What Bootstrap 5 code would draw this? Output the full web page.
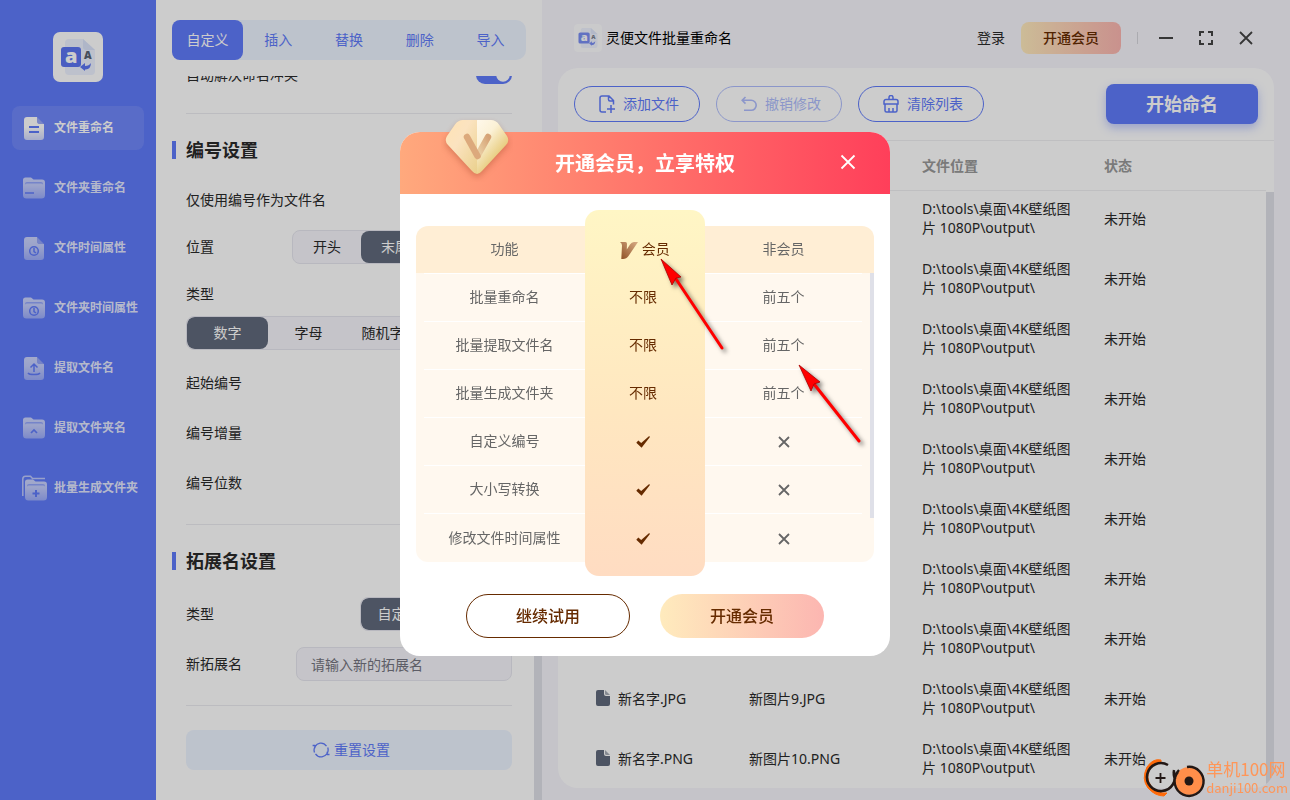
<!DOCTYPE html>
<html lang="zh-CN">
<head>
<meta charset="utf-8">
<meta name="viewport" content="width=device-width, initial-scale=1">
<title>灵便文件批量重命名</title>
<link href="https://cdn.jsdelivr.net/npm/bootstrap@5.3.0/dist/css/bootstrap.min.css" rel="stylesheet">
<style>
  :root { --brand: #607bfb; --ink: #2a2a2a; --pale: #edf4ff; --mist: #f7f6fc; --brown: #662b00; --vip: linear-gradient(90deg, #ffebbd, #fcb6b1); }
  body { font-family: "Noto Sans", "Noto Sans CJK SC", sans-serif; font-size: 14px; line-height: 20px; color: var(--ink); background: var(--mist); }
  .btn { font-size: 14px; line-height: 20px; }
  .app { height: 100vh; min-height: 600px; }

  /* sidebar */
  .side { width: 156px; background: var(--brand); padding: 32px 12px; }
  .logo-lg { width: 50px; height: 50px; margin-bottom: 24px; }
  .side .nav-link { height: 44px; padding: 0 0 0 10px; border-radius: 8px; color: #fff; font-size: 12px; font-weight: 700; white-space: nowrap; }
  .side .nav-link:not(.active) { color: rgba(255,255,255,.84); }
  .side .nav-link.active { background: rgba(255,255,255,.1); }
  .side svg.ico { width: 24px; height: 26px; flex: none; }

  /* settings column */
  .settings { width: 386px; background: #fff; padding-top: 20px; }
  .tabs { margin: 0 16px 16px; background: var(--pale); border-radius: 10px; }
  .tabs .nav-link { height: 40px; padding: 0; border-radius: 8px; color: var(--brand); }
  .tabs .nav-link.active { background: var(--brand); color: #fff; }
  .pane { min-height: 0; padding: 0 30px 30px; }
  .pane hr { margin: 24px 0; color: #ececf0; opacity: 1; flex: none; }
  .sect { font-size: 18px; line-height: 24px; font-weight: 700; margin: 0 0 24px -14px; gap: 10px; flex: none; }
  .sect::before { content: ""; width: 4px; height: 18px; background: var(--brand); }
  .line-s { height: 28px; margin-bottom: 16px; flex: none; }
  .line-m { height: 34px; margin-bottom: 16px; flex: none; }
  .line-end { margin-bottom: 0; }
  .form-switch .form-check-input { width: 36px; height: 18px; margin: 0; background-color: var(--brand); border: 0; }
  .seg { height: 34px; border: 1px solid #e7e7ef; border-radius: 8px; background: var(--mist); overflow: hidden; flex: none; }
  .seg .btn { padding: 0; border: 0; border-radius: 8px; color: var(--ink); flex: 0 0 25%; }
  .seg .btn.active { background: #616a7c; color: #fff; }
  .seg-pos { width: 220px; } .seg-pos .btn { flex-basis: 68px; }
  .seg-ext { width: 152px; } .seg-ext .btn { flex-basis: 75px; }
  .ext-in { width: 216px; height: 34px; font-size: 14px; line-height: 20px; padding: 6px 14px; background: var(--mist); border: 1px solid #e7e7ef; border-radius: 8px; }
  .ext-in::placeholder { color: #757580; }
  .reset { height: 40px; background: var(--pale); color: var(--brand); border-radius: 8px; flex: none; border: 0; }
  .thumb { right: 0; top: 50%; bottom: 0; width: 8px; background: #dfe0e8; }

  /* main column */
  .work { min-width: 0; padding: 0 16px 12px; }
  .top { height: 68px; padding: 8px 16px 0; }
  .logo-sm { width: 28px; height: 28px; }
  .vip-sm { width: 100px; height: 32px; padding: 0; border: 0; border-radius: 8px; background: var(--vip); color: var(--brown); font-weight: 500; }
  .split { width: 1px; height: 12px; background: #d6d6dc; }
  .win { width: 16px; height: 16px; padding: 0; border: 0; line-height: 0; display: block; }
  .panel { background: #fff; border-radius: 20px; min-height: 0; overflow: hidden; }
  .tools { height: 73px; padding: 0 16px; border-bottom: 1px solid #efeff2; flex: none; }
  .tool { width: 126px; height: 36px; padding: 0 0 0 4px; border-radius: 18px; border-color: var(--brand); color: var(--brand); }
  .tool:disabled { opacity: .5; border-color: var(--brand); color: var(--brand); }
  .go { width: 152px; height: 40px; padding: 0; border: 0; border-radius: 8px; background: var(--brand); color: #fff; font-size: 18px; font-weight: 700; box-shadow: 0 4px 10px rgba(96,123,251,.4); }
  .files { table-layout: fixed; width: calc(100% - 8px); }
  .files th { height: 49px; padding: 2px 0 0; color: #999; font-weight: 700; border-bottom: 1px solid #efeff2; }
  .files td { height: 60px; padding: 0 0 4px; line-height: 19px; vertical-align: middle; }
  .files td:nth-child(3) { padding-right: 26px; }
  .files td:first-child { padding-left: 38px; }
  .files .c1 { width: 191px; } .files .c2 { width: 173px; } .files .c3 { width: 182px; }
  .list-thumb { right: 0; top: 51px; bottom: 0; width: 8px; background: #dfe0e8; }

  /* membership dialog */
  .modal-backdrop { --bs-backdrop-opacity: .2; }
  .offer { padding-bottom: 12px; }
  .offer .modal-dialog { --bs-modal-width: 490px; max-width: 490px; margin: 0 auto; min-height: 100%; }
  .offer .modal-content { border: 0; border-radius: 20px; }
  .offer .modal-header { height: 62px; padding: 2px 34px 0; border: 0; border-radius: 20px 20px 0 0; background: linear-gradient(90deg, #ffa97d, #ff7e6e 40%, #ff3f5a); color: #fff; }
  .offer h2 { font-size: 20px; line-height: 28px; font-weight: 700; margin: 0; }
  .shut { right: 34px; top: 22px; }
  .gem { left: 41px; top: -18px; width: 72px; height: 68px; }
  .offer .modal-body { padding: 32px 16px; }
  .plan { background: linear-gradient(#ffeed5 0 47px, #fff8ef 47px); border-radius: 12px; padding: 0 12px 0 8px; }
  .plan::before { content: ""; position: absolute; top: -16px; bottom: -14px; left: 0; right: 0; width: 120px; margin: 0 auto; border-radius: 14px; background: linear-gradient(#fff6c5, #ffe7c0 55%, #ffdcc2); }
  .plan table { table-layout: fixed; position: relative; color: #666; text-align: center; }
  .plan th { height: 47px; padding: 0; font-weight: 400; }
  .plan td { height: 48px; padding: 0; }
  .plan tbody td { border-top: 1px solid #fff; }
  .plan td:nth-child(2), .plan th:nth-child(2) { color: var(--brown); }
  .plan tbody td:nth-child(2) { border-color: transparent; padding-right: 4px; }
  .plan tr:last-child td { height: 49px; }
  .plan .k1 { width: 161px; } .plan .k2 { width: 120px; }
  .plan-thumb { right: 0; top: 47px; width: 4px; height: 245px; background: #dfe0e8; }
  .offer .modal-footer { padding: 0 0 18px; border: 0; gap: 30px; }
  .pill { width: 164px; height: 44px; margin: 0; border-radius: 22px; font-size: 16px; font-weight: 500; color: var(--brown); border: 1px solid var(--brown); }
  .pill-vip { background: var(--vip); border: 0; }
  .arrows { left: 0; top: 0; width: 490px; height: 524px; pointer-events: none; filter: drop-shadow(3px 3px 2px rgba(0,0,0,.5)); }

  /* site mark */
  .stamp { right: 2px; bottom: 0; z-index: 1060; color: #ff9658; font-family: "Noto Sans CJK SC", sans-serif; font-size: 17px; line-height: 20px; }
  .stamp svg { width: 64px; height: 44px; }
  .stamp small { font-size: 13px; line-height: 18px; }
</style>
</head>
<body>
<svg class="position-absolute" width="0" height="0" aria-hidden="true">
  <defs>
    <linearGradient id="fade" x1="0" y1="0" x2="0" y2="1"><stop offset=".45" stop-color="#fff"/><stop offset="1" stop-color="#fff" stop-opacity=".68"/></linearGradient>
    <linearGradient id="fade2" x1="0" y1="0" x2="0" y2="1"><stop offset="0" stop-color="#fff" stop-opacity=".68"/><stop offset=".4" stop-color="#fff" stop-opacity=".62"/><stop offset="1" stop-color="#fff" stop-opacity=".38"/></linearGradient>
  </defs>
  <symbol id="sheet" viewBox="0 0 24 26"><path d="M5 2h10v4a3 3 0 0 0 3 3h4v13a3 3 0 0 1-3 3H5a3 3 0 0 1-3-3V5a3 3 0 0 1 3-3z"/><path d="M15 2v4a3 3 0 0 0 3 3h4z" fill="#aab7f6" fill-opacity=".7"/></symbol>
  <symbol id="folder" viewBox="0 0 24 26"><path d="M1 5a2.500 2.500 0 0 1 2.500-2.500H9l2.500 2H20a3 3 0 0 1 3 3V20a3.500 3.500 0 0 1-3.500 3.500h-15A3.500 3.500 0 0 1 1 20z"/><path d="M3 9.500V9q0-2 2-2h14q2 0 2 2v.5q-1-1-2-1H5q-1 0-2 1z" fill="#607bfb" opacity=".5"/></symbol>
  <symbol id="mark" viewBox="0 0 50 50"><rect width="50" height="50" rx="7" fill="#fff"/><path d="M15 7h15l12 11v21a4 4 0 0 1-4 4H16a4 4 0 0 1-4-4V11a4 4 0 0 1 3-4z" fill="#edf2ff"/><path d="M30 7l12 11h-9a3 3 0 0 1-3-3z" fill="#dbe4fb"/><rect x="8" y="15" width="20" height="20" rx="3" fill="#5c75f2"/><text x="12" y="31" font-family="Open Sans" font-size="20" font-weight="800" fill="#fff">a</text><text x="31" y="27" font-family="Open Sans" font-size="10.500" font-weight="800" fill="#596272">A</text><path d="M27 35l5-4v3q4 0 6-3-.4 7-6 6.500V39z" fill="#5c75f2"/></symbol>
  <symbol id="doc" viewBox="0 0 14 16"><path d="M2 0h6v4a2 2 0 0 0 2 2h4v8a2 2 0 0 1-2 2H2a2 2 0 0 1-2-2V2a2 2 0 0 1 2-2z"/><path d="M9 0l5 5h-3.500a1.500 1.500 0 0 1-1.500-1.500z" opacity=".55"/></symbol>
  <symbol id="tick" viewBox="0 0 14 12"><path d="M.3 6.700L2.300 4.500l2.900 2.600L13.200.1l.7.8L5.600 11.800z"/></symbol>
  <symbol id="cross" viewBox="0 0 12 12"><path d="M1 1l10 10M11 1L1 11" stroke="#666" stroke-width="1.800"/></symbol>
</svg>

<div class="app d-flex overflow-hidden">
  <aside class="side d-flex flex-column flex-shrink-0">
    <svg class="logo-lg align-self-center flex-shrink-0"><use href="#mark"/></svg>
    <nav class="nav flex-column gap-3">
      <a href="#" class="nav-link active d-flex align-items-center gap-2"><svg class="ico" viewBox="0 0 24 26"><use href="#sheet" fill="url(#fade)"/><path d="M7 12h10M7 17h10" stroke="#607bfb" stroke-width="2"/></svg>文件重命名</a>
      <a href="#" class="nav-link d-flex align-items-center gap-2"><svg class="ico" viewBox="0 0 24 26"><use href="#folder" fill="url(#fade2)"/><path d="M3 18h9" stroke="#607bfb" stroke-width="1.500"/></svg>文件夹重命名</a>
      <a href="#" class="nav-link d-flex align-items-center gap-2"><svg class="ico" viewBox="0 0 24 26"><use href="#sheet" fill="url(#fade2)"/><g fill="none" stroke="#607bfb" stroke-width="1.500"><circle cx="12" cy="16" r="4.300"/><path d="M12 13v3.500l2 1.500"/></g></svg>文件时间属性</a>
      <a href="#" class="nav-link d-flex align-items-center gap-2"><svg class="ico" viewBox="0 0 24 26"><use href="#folder" fill="url(#fade2)"/><g fill="none" stroke="#607bfb" stroke-width="1.500"><circle cx="12" cy="16" r="4.300"/><path d="M12 13v3.500l2 1.500"/></g></svg>文件夹时间属性</a>
      <a href="#" class="nav-link d-flex align-items-center gap-2"><svg class="ico" viewBox="0 0 24 26"><use href="#sheet" fill="url(#fade2)"/><path d="M12 17V9.500M8.500 12.500L12 9l3.500 3.500M6 18q1 1.500 6 1.500t6-1.500" fill="none" stroke="#607bfb" stroke-width="1.500"/></svg>提取文件名</a>
      <a href="#" class="nav-link d-flex align-items-center gap-2"><svg class="ico" viewBox="0 0 24 26"><use href="#folder" fill="url(#fade2)"/><path d="M9 18l3-3 3 3" fill="none" stroke="#607bfb" stroke-width="1.700"/></svg>提取文件夹名</a>
      <a href="#" class="nav-link d-flex align-items-center gap-2"><svg class="ico overflow-visible" viewBox="0 0 24 26"><path d="M.8 21V4Q.8 1.200 3.500 1.200H8.500l2 2.300H23" fill="none" stroke="#fff" stroke-opacity=".6" stroke-width="1.500"/><use href="#folder" x="2" y="2" width="24" height="26" fill="url(#fade2)"/><path d="M14 15v7M10.500 18.500h7" stroke="#607bfb" stroke-width="2"/></svg>批量生成文件夹</a>
    </nav>
  </aside>

  <section class="settings d-flex flex-column flex-shrink-0 position-relative">
    <nav class="tabs nav nav-pills nav-justified flex-shrink-0">
      <button type="button" class="nav-link nav-item active">自定义</button>
      <button type="button" class="nav-link nav-item">插入</button>
      <button type="button" class="nav-link nav-item">替换</button>
      <button type="button" class="nav-link nav-item">删除</button>
      <button type="button" class="nav-link nav-item">导入</button>
    </nav>
    <form class="pane flex-grow-1 d-flex flex-column justify-content-end overflow-hidden">
      <div class="line-s line-end form-switch p-0 d-flex align-items-center justify-content-between">
        <label for="conflict">自动解决命名冲突</label>
        <input class="form-check-input" type="checkbox" role="switch" id="conflict" checked>
      </div>
      <hr>
      <h3 class="sect d-flex align-items-center">编号设置</h3>
      <div class="line-s d-flex align-items-center">仅使用编号作为文件名</div>
      <div class="line-m d-flex align-items-center justify-content-between">位置
        <div class="seg seg-pos d-flex"><button type="button" class="btn">开头</button><button type="button" class="btn active">末尾</button></div>
      </div>
      <div class="line-s d-flex align-items-center mb-2">类型</div>
      <div class="seg d-flex mb-3"><button type="button" class="btn active">数字</button><button type="button" class="btn">字母</button><button type="button" class="btn">随机字母</button></div>
      <div class="line-m d-flex align-items-center">起始编号</div>
      <div class="line-m d-flex align-items-center">编号增量</div>
      <div class="line-m line-end d-flex align-items-center">编号位数</div>
      <hr>
      <h3 class="sect d-flex align-items-center">拓展名设置</h3>
      <div class="line-m d-flex align-items-center justify-content-between">类型
        <div class="seg seg-ext d-flex"><button type="button" class="btn active">自定义</button></div>
      </div>
      <div class="line-m line-end d-flex align-items-center justify-content-between">
        <label for="ext">新拓展名</label>
        <input class="form-control ext-in" id="ext" type="text" placeholder="请输入新的拓展名">
      </div>
      <hr>
      <button type="button" class="btn reset d-flex align-items-center justify-content-center gap-1 ps-3">
        <svg width="18" height="16" viewBox="0 0 18 16" fill="none" stroke="currentColor" stroke-width="1.300"><path d="M2.500 10.500A7 7 0 0 1 8 1.200q4-.6 6.500 3M15.700 5.500A7 7 0 0 1 10 14.800q-4 .6-6.500-3M.6 3.500l2.200 0 .2 2.800M17.500 12.500h-2.200l-.2-2.800"/></svg>重置设置</button>
    </form>
    <div class="thumb position-absolute"></div>
  </section>

  <main class="work flex-grow-1 d-flex flex-column">
    <header class="top d-flex align-items-center flex-shrink-0">
      <svg class="logo-sm me-1" opacity=".8"><use href="#mark"/></svg>
      <span class="text-black">灵便文件批量重命名</span>
      <a href="#" class="ms-auto me-3 text-reset text-decoration-none">登录</a>
      <button type="button" class="btn vip-sm me-3">开通会员</button>
      <span class="split me-3"></span>
      <div class="d-flex gap-4 ps-1 pe-1">
        <button type="button" class="btn win" aria-label="最小化"><svg width="16" height="16" stroke="#444" stroke-width="2"><path d="M1 8h14"/></svg></button>
        <button type="button" class="btn win" aria-label="最大化"><svg width="16" height="16" fill="none" stroke="#444" stroke-width="2"><path d="M2 6V2h4M10 2h4v4M14 10v4h-4M6 14H2v-4"/></svg></button>
        <button type="button" class="btn win" aria-label="关闭"><svg width="16" height="16" stroke="#444" stroke-width="1.800"><path d="M2 2l12 12M14 2L2 14"/></svg></button>
      </div>
    </header>
    <div class="panel flex-grow-1 d-flex flex-column">
      <div class="tools d-flex align-items-center gap-3">
        <button type="button" class="btn tool d-flex align-items-center justify-content-center gap-2"><svg width="16" height="18" viewBox="0 0 16 18" fill="none" stroke="currentColor" stroke-width="1.500"><path d="M7 17H3a2 2 0 0 1-2-2V3a2 2 0 0 1 2-2h7l4.500 4.500V9.500M9.500 1v3.500q0 1.500 1.500 1.500h3.500M8 14h8M12 10v8"/></svg>添加文件</button>
        <button type="button" class="btn tool d-flex align-items-center justify-content-center gap-2" disabled><svg width="16" height="16" viewBox="0 0 16 16" fill="none" stroke="currentColor" stroke-width="1.600"><path d="M4.500 1L1.200 4.300l3.300 3.300M1.500 4.300h8.700a5 5 0 0 1 0 10H3"/></svg>撤销修改</button>
        <button type="button" class="btn tool d-flex align-items-center justify-content-center gap-2"><svg width="16" height="18" viewBox="0 0 16 18" fill="none" stroke="currentColor" stroke-width="1.500"><path d="M6 4.500V2.500a2 2 0 0 1 4 0v2M1 9V6.500a2 2 0 0 1 2-2h10a2 2 0 0 1 2 2V9zM2 9v6.500q0 1.500 1.500 1.500h9q1.500 0 1.500-1.500V9M6 17v-4M10 17v-4"/></svg>清除列表</button>
        <button type="button" class="btn go ms-auto">开始命名</button>
      </div>
      <div class="position-relative flex-grow-1 overflow-hidden">
        <table class="files">
          <colgroup><col class="c1"><col class="c2"><col class="c3"><col></colgroup>
          <thead><tr><th></th><th></th><th scope="col">文件位置</th><th scope="col">状态</th></tr></thead>
          <tbody>
            <tr><td></td><td></td><td>D:\tools\桌面\4K壁纸图片 1080P\output\</td><td>未开始</td></tr>
            <tr><td></td><td></td><td>D:\tools\桌面\4K壁纸图片 1080P\output\</td><td>未开始</td></tr>
            <tr><td></td><td></td><td>D:\tools\桌面\4K壁纸图片 1080P\output\</td><td>未开始</td></tr>
            <tr><td></td><td></td><td>D:\tools\桌面\4K壁纸图片 1080P\output\</td><td>未开始</td></tr>
            <tr><td></td><td></td><td>D:\tools\桌面\4K壁纸图片 1080P\output\</td><td>未开始</td></tr>
            <tr><td></td><td></td><td>D:\tools\桌面\4K壁纸图片 1080P\output\</td><td>未开始</td></tr>
            <tr><td></td><td></td><td>D:\tools\桌面\4K壁纸图片 1080P\output\</td><td>未开始</td></tr>
            <tr><td></td><td></td><td>D:\tools\桌面\4K壁纸图片 1080P\output\</td><td>未开始</td></tr>
            <tr><td><span class="d-flex align-items-center"><svg class="me-2" width="14" height="16" fill="#616a7c"><use href="#doc"/></svg>新名字.JPG</span></td><td>新图片9.JPG</td><td>D:\tools\桌面\4K壁纸图片 1080P\output\</td><td>未开始</td></tr>
            <tr><td><span class="d-flex align-items-center"><svg class="me-2" width="14" height="16" fill="#616a7c"><use href="#doc"/></svg>新名字.PNG</span></td><td>新图片10.PNG</td><td>D:\tools\桌面\4K壁纸图片 1080P\output\</td><td>未开始</td></tr>
          </tbody>
        </table>
        <div class="list-thumb position-absolute"></div>
      </div>
    </div>
  </main>
</div>

<div class="modal-backdrop show"></div>
<div class="modal offer show d-block" tabindex="-1" role="dialog" aria-labelledby="offerTitle">
  <div class="modal-dialog modal-dialog-centered">
    <div class="modal-content">
      <div class="modal-header justify-content-center">
        <h2 id="offerTitle">开通会员，立享特权</h2>
        <button type="button" class="btn win shut position-absolute" aria-label="关闭"><svg width="16" height="16" stroke="#fff" stroke-width="1.800"><path d="M1.500 1.500l13 13M14.500 1.500l-13 13"/></svg></button>
      </div>
      <svg class="gem position-absolute" viewBox="0 0 72 68">
        <defs>
          <linearGradient id="g1" x1="0" y1="0" x2="1" y2="1"><stop offset="0" stop-color="#ffe3b4"/><stop offset=".4" stop-color="#fbe3c0"/><stop offset="1" stop-color="#ead08c"/></linearGradient>
          <linearGradient id="g2" x1="0" y1="0" x2=".7" y2="1"><stop offset="0" stop-color="#fff8ea"/><stop offset=".35" stop-color="#fbf1d6"/><stop offset=".75" stop-color="#e8cd80"/><stop offset="1" stop-color="#f1dfae"/></linearGradient>
          <linearGradient id="g3" x1="1" y1="0" x2="0" y2="1"><stop offset="0" stop-color="#d6a376"/><stop offset="1" stop-color="#ecd3a9"/></linearGradient>
        </defs>
        <g style="filter:drop-shadow(0 3px 3px rgba(150,60,30,.35))">
          <path d="M36 6H22q-5 0-8 4.500L6 22q-3 5 1 9l24 26q2.500 3 5 3z" fill="url(#g1)"/>
          <path d="M36 6h14q5 0 8 4.500L66 22q3 5-1 9L41 57q-2.500 3-5 3z" fill="url(#g2)"/>
        </g>
        <path d="M47 23L37 41" stroke="url(#g3)" stroke-width="6.500" stroke-linecap="round"/>
        <path d="M26 23l10.500 19" stroke="#dca97c" stroke-width="6.500" stroke-linecap="round"/>
      </svg>
      <div class="modal-body">
        <div class="plan position-relative">
          <table class="w-100">
            <colgroup><col class="k1"><col class="k2"><col></colgroup>
            <thead><tr><th scope="col">功能</th><th scope="col"><svg width="18" height="17" viewBox="0 0 18 17"><defs><linearGradient id="gv" x1="1" y1="0" x2="0" y2="1"><stop offset="0" stop-color="#d8ac85"/><stop offset="1" stop-color="#8d4f24"/></linearGradient></defs><path d="M0 0h5.500q1.500 0 1.500 1.800L6.800 7.500 10 2.500Q11.500 0 14 0h4L8.500 14Q6.500 17 3 17H1.300L2 3.500Q2 1 0 0z" fill="url(#gv)"/></svg> 会员</th><th scope="col">非会员</th></tr></thead>
            <tbody>
              <tr><td>批量重命名</td><td>不限</td><td>前五个</td></tr>
              <tr><td>批量提取文件名</td><td>不限</td><td>前五个</td></tr>
              <tr><td>批量生成文件夹</td><td>不限</td><td>前五个</td></tr>
              <tr><td>自定义编号</td><td><svg width="14" height="12" fill="#662b00"><use href="#tick"/></svg></td><td><svg width="12" height="12"><use href="#cross"/></svg></td></tr>
              <tr><td>大小写转换</td><td><svg width="14" height="12" fill="#662b00"><use href="#tick"/></svg></td><td><svg width="12" height="12"><use href="#cross"/></svg></td></tr>
              <tr><td>修改文件时间属性</td><td><svg width="14" height="12" fill="#662b00"><use href="#tick"/></svg></td><td><svg width="12" height="12"><use href="#cross"/></svg></td></tr>
            </tbody>
          </table>
          <div class="plan-thumb position-absolute"></div>
        </div>
      </div>
      <div class="modal-footer justify-content-center">
        <button type="button" class="btn pill">继续试用</button>
        <button type="button" class="btn pill pill-vip">开通会员</button>
      </div>
      <svg class="arrows position-absolute" viewBox="0 0 490 524" fill="#f00" stroke="#f00">
        <path d="M276 147l46 69" stroke-width="3" stroke-linecap="round"/><path d="M261 127l20 18-5 1-4 7z" stroke="#a00" stroke-width=".8"/>
        <path d="M414 252l45 57" stroke-width="3" stroke-linecap="round"/><path d="M399 233l21 17-6 2-3 7z" stroke="#a00" stroke-width=".8"/>
      </svg>
    </div>
  </div>
</div>

<div class="stamp position-fixed d-flex align-items-center">
  <svg viewBox="0 0 64 44" fill="none">
    <path d="M19 4q-8-2-14 7-6 12 1 21 7 8 16 8l3-3q-10 1-16-7-6-9-1-17 5-7 11-7z" fill="#ff6a0a" stroke="#ff6a0a"/>
    <path d="M26 9A14 14 0 1 0 32 16" stroke="#231815" stroke-width="2.600"/>
    <path d="M13.500 22h10M18.500 17v10" stroke="#231815" stroke-width="1.800"/>
    <circle cx="47" cy="25" r="14" fill="#ff8e4a"/><path d="M45 11a14.500 14.500 0 1 1-9 5M32 14q-1 5 1 9 0-5 4-9" stroke="#231815" stroke-width="2.400"/>
    <circle cx="47" cy="25" r="4.500" fill="#231815"/>
  </svg>
  <div class="d-flex flex-column">单机100网<small>danji100.com</small></div>
</div>
<script src="https://cdn.jsdelivr.net/npm/bootstrap@5.3.0/dist/js/bootstrap.bundle.min.js"></script>
</body>
</html>
